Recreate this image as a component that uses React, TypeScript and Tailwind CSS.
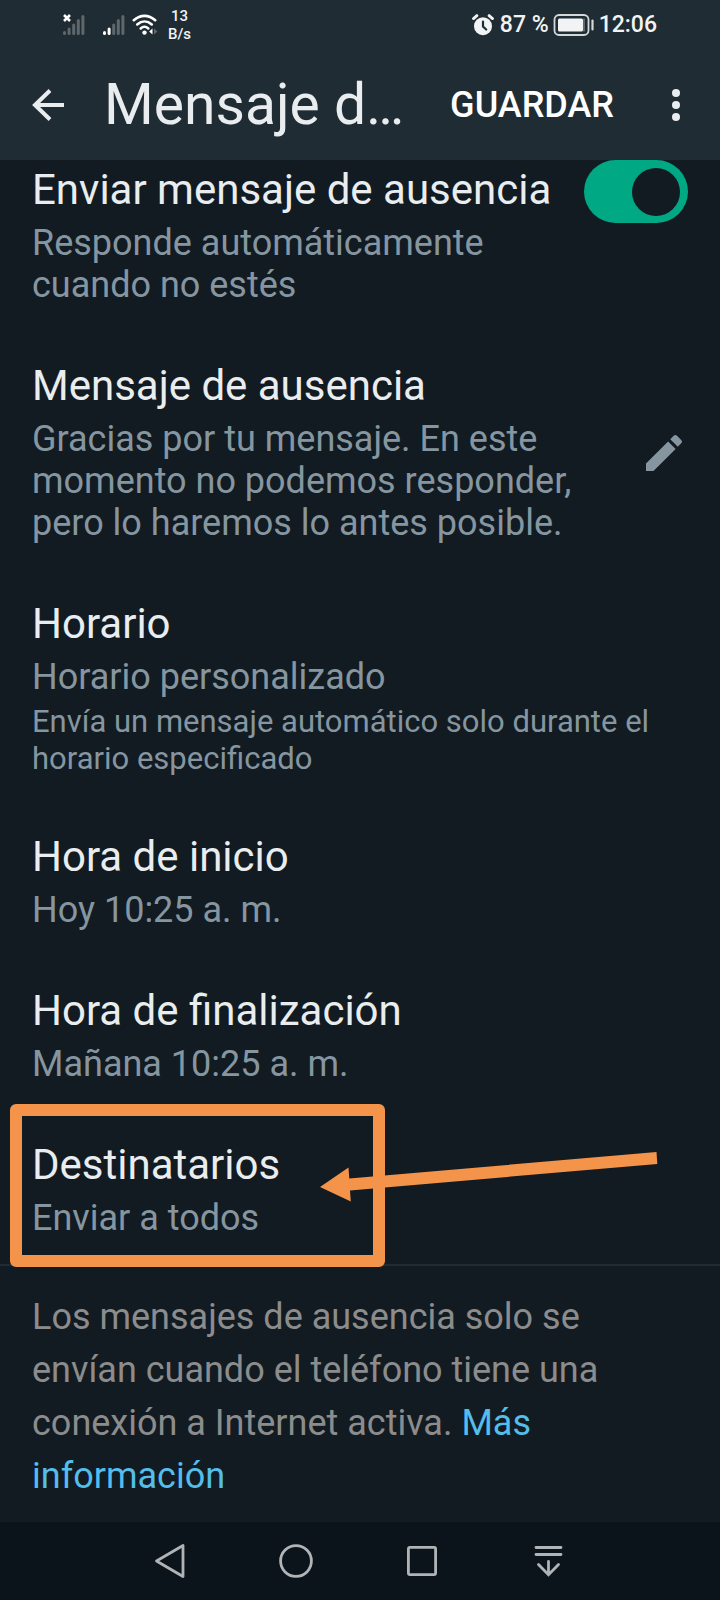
import { useState } from 'react';
import type { ReactNode } from 'react';

interface SettingProps {
  title: string;
  value: string;
  hint?: string;
  action?: ReactNode;
}

function Setting({ title, value, hint, action }: SettingProps) {
  return (
    <div className="flex items-center justify-between gap-6">
      <div className="min-w-0">
        <h2 className="text-[42px] leading-[50px] text-[#e9edef]">{title}</h2>
        <p className="mt-[7px] text-[36px] leading-[42px] text-[#8696a0]">{value}</p>
        {hint && <p className="mt-[5px] text-[31px] leading-[37px] text-[#8696a0]">{hint}</p>}
      </div>
      {action}
    </div>
  );
}

function SignalBars({ active, missing }: { active: number; missing?: boolean }) {
  return (
    <svg width="22" height="22" viewBox="0 0 22 22" fill="none" strokeWidth="3" strokeLinecap="round" aria-hidden="true">
      {[18.5, 15, 11, 6.5, 2.5].map((top, i) => (
        <path
          key={top}
          d={`M${1.5 + i * 4.6} ${top}V19.5`}
          stroke={i < active ? '#ffffff' : '#5e676c'}
        />
      ))}
      {missing && (
        <>
          <path d="M0 0h9v9H0z" fill="#202c33" />
          <path d="M1 1l6 6M7 1l-6 6" stroke="#ffffff" strokeWidth="2.6" strokeLinecap="butt" />
        </>
      )}
    </svg>
  );
}

function StatusBar() {
  return (
    <div className="flex h-[50px] items-center justify-between px-[63px] font-medium text-[#f1f3f4]">
      <div className="flex items-center">
        <SignalBars active={0} missing />
        <span className="ml-[18px] flex">
          <SignalBars active={2} />
        </span>
        <svg className="ml-[7px]" width="26" height="22" viewBox="0 0 26 22" fill="none" stroke="#ffffff" strokeWidth="2.6" strokeLinecap="round" aria-hidden="true">
          <path d="M1.8 6.2C8.4.4 16.6.4 23.2 6.2" />
          <path d="M5.2 10.4c4.5-3.9 10.1-3.9 14.6 0" />
          <path d="M8.7 14.4c2.3-2 5.3-2 7.6 0" />
          <circle cx="12.5" cy="18.6" r="2.2" fill="#ffffff" stroke="none" />
          <path d="M20.5 14.5v6l-3.4-3z" fill="#ffffff" stroke="none" />
          <path d="M22 14.5v6l3.4-3z" fill="#5e676c" stroke="none" />
        </svg>
        <div className="ml-2.5 text-center text-[15px] leading-[18px]">
          <div>13</div>
          <div>B/s</div>
        </div>
      </div>
      <div className="flex items-center text-[23px] leading-7">
        <svg width="22" height="22" viewBox="0 0 22 22" fill="none" strokeLinecap="round" aria-hidden="true">
          <circle cx="11" cy="12.2" r="9" fill="#f1f3f4" />
          <path d="M1.5 4.6l3.4-3M20.5 4.6l-3.4-3" stroke="#f1f3f4" strokeWidth="2.8" />
          <path d="M11 7.5v5l3.2 3" stroke="#202c33" strokeWidth="2.2" />
        </svg>
        <span className="ml-1.5">87 %</span>
        <svg className="ml-1" width="42" height="24" viewBox="0 0 42 24" fill="none" aria-hidden="true">
          <rect x="1.5" y="2" width="34" height="20" rx="4.5" stroke="#d3d7d9" strokeWidth="1.8" />
          <rect x="5" y="5.5" width="25" height="13" rx="1.5" fill="#f1f3f4" />
          <path d="M30 5.5h2v13h-2z" fill="#5e676c" />
          <path d="M39.5 7.5v9" stroke="#d3d7d9" strokeWidth="2.2" strokeLinecap="round" />
        </svg>
        <span className="ml-1">12:06</span>
      </div>
    </div>
  );
}

function AppBar() {
  return (
    <div className="flex h-[110px] items-center pr-5 pl-8">
      <button type="button" aria-label="Atrás" className="shrink-0">
        <svg width="32" height="32" viewBox="0 0 32 32" fill="none" stroke="#e9edef" strokeWidth="4" aria-hidden="true">
          <path d="M32 16H3M18 1.500L3 16l15 14.500" />
        </svg>
      </button>
      <h1 className="ml-[40px] flex-1 text-[57px] leading-[72px] whitespace-nowrap text-[#e9edef]">
        Mensaje d…
      </h1>
      <button type="button" className="shrink-0 text-[36px] leading-[42px] font-medium text-white">
        GUARDAR
      </button>
      <button type="button" aria-label="Más opciones" className="ml-[38px] flex w-12 shrink-0 justify-center">
        <svg width="8" height="32" viewBox="0 0 8 32" fill="#e9edef" aria-hidden="true">
          <circle cx="4" cy="4" r="4" />
          <circle cx="4" cy="16" r="4" />
          <circle cx="4" cy="28" r="4" />
        </svg>
      </button>
    </div>
  );
}

function NavBar() {
  return (
    <nav className="bg-[#0b141a]">
      <div className="flex h-[78px] items-center justify-center gap-[90px] pr-0.5">
        <button type="button" aria-label="Volver">
          <svg width="36" height="36" viewBox="0 0 36 36" fill="none" stroke="#b1b4b6" strokeWidth="2.8" strokeLinejoin="round" aria-hidden="true">
            <path d="M31 2.5v31L4.500 18z" />
          </svg>
        </button>
        <button type="button" aria-label="Inicio">
          <svg width="36" height="36" viewBox="0 0 36 36" fill="none" stroke="#b1b4b6" strokeWidth="2.8" aria-hidden="true">
            <circle cx="18" cy="18" r="15.4" />
          </svg>
        </button>
        <button type="button" aria-label="Recientes">
          <svg width="36" height="36" viewBox="0 0 36 36" fill="none" stroke="#b1b4b6" strokeWidth="2.8" aria-hidden="true">
            <rect x="4.4" y="4.4" width="27.2" height="27.2" rx="1.5" />
          </svg>
        </button>
        <button type="button" aria-label="Panel de notificaciones">
          <svg width="36" height="36" viewBox="0 0 36 36" fill="none" stroke="#b1b4b6" strokeWidth="2.8" strokeLinecap="round" aria-hidden="true">
            <path d="M6 4.500h25M6 11.500h25M18.500 18.500v13M8.500 21.500l10 10.200 10-10.200" />
          </svg>
        </button>
      </div>
    </nav>
  );
}

export default function App() {
  const [enabled, setEnabled] = useState(true);

  return (
    <div className="flex min-h-screen flex-col bg-[#121b22] font-[Roboto,sans-serif]">
      <header className="bg-[#202c33]">
        <StatusBar />
        <AppBar />
      </header>

      <main className="flex-1">
        <div className="flex flex-col gap-[55px] px-8 pb-[25px]">
          <div className="flex items-start justify-between">
            <label htmlFor="away" className="min-w-0 pt-[5px]">
              <span className="block text-[42px] leading-[50px] text-[#e9edef]">Enviar mensaje de ausencia</span>
              <span className="mt-[7px] block max-w-[480px] text-[36px] leading-[42px] text-[#8696a0]">
                Responde automáticamente cuando no estés
              </span>
            </label>
            <input
              id="away"
              type="checkbox"
              role="switch"
              checked={enabled}
              onChange={(e) => setEnabled(e.target.checked)}
              className="flex h-[63px] w-[104px] shrink-0 appearance-none items-center rounded-full bg-[#3b4a54] px-2 before:size-12 before:rounded-full before:bg-[#121b22] checked:justify-end checked:bg-[#00a884]"
            />
          </div>

          <Setting
            title="Mensaje de ausencia"
            value="Gracias por tu mensaje. En este momento no podemos responder, pero lo haremos lo antes posible."
            action={
              <button type="button" aria-label="Editar mensaje" className="shrink-0">
                <svg width="48" height="48" viewBox="0 0 24 24" fill="#8696a0" aria-hidden="true">
                  <path d="M3 17.250V21h3.750L17.810 9.940l-3.750-3.750L3 17.250zM20.710 7.040a1 1 0 0 0 0-1.410l-2.340-2.340a1 1 0 0 0-1.410 0l-1.830 1.830 3.750 3.750 1.830-1.830z" />
                </svg>
              </button>
            }
          />
          <Setting
            title="Horario"
            value="Horario personalizado"
            hint="Envía un mensaje automático solo durante el horario especificado"
          />
          <Setting title="Hora de inicio" value="Hoy 10:25 a. m." />
          <Setting title="Hora de finalización" value="Mañana 10:25 a. m." />

          <div className="relative">
            <Setting title="Destinatarios" value="Enviar a todos" />
            {/* highlight frame and arrow drawn over the row */}
            <div className="pointer-events-none absolute -top-9 -left-[22px] h-[163px] w-[375px] rounded-md border-12 border-[#f4934a]" />
            <svg className="pointer-events-none absolute top-2 left-72" width="340" height="56" viewBox="0 -8 340 56" fill="#f4934a" aria-hidden="true">
              <path d="M0 31L28.500 11.500l.8 11L336.500-4l.8 12L30 34.500l.8 11z" />
            </svg>
          </div>
        </div>

        <p className="border-t-2 border-[#202c33] px-8 pt-[25px] pb-[18px] text-[36px] leading-[53px] text-[#8c8c8c]">
          Los mensajes de ausencia solo se envían cuando el teléfono tiene una conexión a Internet activa.{' '}
          <a href="#mas-informacion" className="text-[#53bdeb]">
            Más información
          </a>
        </p>
      </main>

      <NavBar />
    </div>
  );
}
